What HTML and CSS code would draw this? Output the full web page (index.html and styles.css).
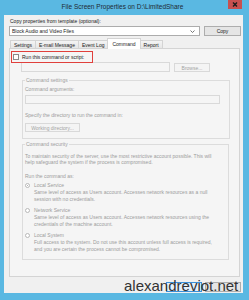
FILE: index.html
```html
<!DOCTYPE html>
<html lang="en">
<head>
    <meta charset="UTF-8">
    <title>File Screen Properties on D:\LimitedShare</title>
    <link rel="stylesheet" href="styles.css">
</head>
<body>

    <div class="window">
        <!-- Title bar -->
        <div class="titlebar">
            <span class="title">File Screen Properties on D:\LimitedShare</span>
            <span class="close">
                <svg width="14" height="9" viewBox="0 0 14 9">
                    <path d="M5 2.5 L9 6.5 M9 2.5 L5 6.5" stroke="#1b1b1b" stroke-width="1.4"/>
                </svg>
            </span>
        </div>

        <div class="frame">
            <div class="client">
                <div class="label top-label">Copy properties from template (optional):</div>
                <div class="template-row">
                    <div class="combo">
                        <span>Block Audio and Video Files</span>
                        <svg width="5" height="3" viewBox="0 0 5 3">
                            <path d="M0.5 0.5 L2.5 2.5 L4.5 0.5" stroke="#555" stroke-width="0.8" fill="none"/>
                        </svg>
                    </div>
                    <div class="btn copy-btn">Copy</div>
                </div>

                <!-- Tabs -->
                <div class="tabs">
                    <span class="tab">Settings</span>
                    <span class="tab">E-mail Message</span>
                    <span class="tab">Event Log</span>
                    <span class="tab active">Command</span>
                    <span class="tab">Report</span>
                </div>

                <div class="panel">
                    <div class="run-row">
                        <span class="checkbox"></span>
                        <span>Run this command or script:</span>
                    </div>
                    <div class="path-row">
                        <div class="input path-input"></div>
                        <div class="btn disabled browse-btn">Browse...</div>
                    </div>

                    <!-- Command settings -->
                    <fieldset class="group settings-group">
                        <legend>Command settings</legend>
                        <div class="muted args-label">Command arguments:</div>
                        <div class="input args-input"></div>
                        <div class="muted dir-label">Specify the directory to run the command in:</div>
                        <div class="btn disabled dir-btn">Working directory...</div>
                    </fieldset>

                    <!-- Command security -->
                    <fieldset class="group security-group">
                        <legend>Command security</legend>
                        <div class="muted security-text">To maintain security of the server, use the most restrictive account possible. This will<br>help safeguard the system if the process is compromised.</div>
                        <div class="muted run-as">Run the command as:</div>

                        <div class="radio-row first">
                            <span class="radio checked"></span>
                            <span>Local Service</span>
                        </div>
                        <div class="muted desc">Same level of access as Users account. Accesses network resources as a null<br>session with no credentials.</div>

                        <div class="radio-row">
                            <span class="radio"></span>
                            <span>Network Service</span>
                        </div>
                        <div class="muted desc">Same level of access as Users account. Accesses network resources using the<br>credentials of the machine account.</div>

                        <div class="radio-row">
                            <span class="radio"></span>
                            <span>Local System</span>
                        </div>
                        <div class="muted desc">Full access to the system. Do not use this account unless full access is required,<br>and you are certain the process cannot be compromised.</div>
                    </fieldset>
                </div>

                <!-- OK / Cancel, hidden under the watermark -->
                <div class="dialog-buttons">
                    <div class="btn ok-btn"></div>
                    <div class="btn"></div>
                </div>
            </div>
        </div>

        <div class="watermark">alexandreviot.net</div>
    </div>

</body>
</html>
```

FILE: styles.css
```css
/* --- Base --- */
* {
    margin: 0;
    padding: 0;
    box-sizing: border-box;
}

body {
    font-family: 'Liberation Sans', Arial, sans-serif;
    background-color: #5ab8e2;
    width: 249px;
    height: 300px;
    overflow: hidden;
}

/* --- Window frame --- */
.window {
    position: relative;
    width: 249px;
    height: 300px;
    display: flex;
    flex-direction: column;
    background-color: #5ab8e2;
}

.titlebar {
    height: 15px;
    display: flex;
    align-items: flex-start;
    justify-content: center;
    padding-right: 4px;
}

.title {
    font-size: 6.5px;
    line-height: 13px;
    color: #1f2a33;
}

.close {
    position: absolute;
    top: 0;
    left: 228px;
    width: 14px;
    height: 9px;
    background-color: #c75050;
    display: flex;
}

.frame {
    flex: 1;
    padding: 0 6px 7px 4px;
    display: flex;
}

.client {
    flex: 1;
    background-color: #f0f0f0;
    padding: 3px 2px 0 5px;
    font-size: 5px;
    line-height: 6px;
    color: #1a1a1a;
}

/* --- Template row --- */
.top-label {
    padding-left: 1px;
}

.template-row {
    display: flex;
    margin-top: 2px;
    height: 10px;
}

.combo {
    width: 191px;
    background-color: #ffffff;
    border: 1px solid #acacac;
    display: flex;
    align-items: center;
    justify-content: space-between;
    padding: 0 4px 0 2px;
}

.btn {
    display: flex;
    align-items: center;
    justify-content: center;
    background-color: #e5e5e5;
    border: 1px solid #adadad;
    color: #1a1a1a;
}

.copy-btn {
    width: 37px;
    margin-left: 4px;
}

/* --- Tabs --- */
.tabs {
    display: flex;
    height: 10px;
    margin-top: 2px;
    padding-left: 1px;
    position: relative;
    z-index: 1;
}

.tab {
    margin-top: 2px;
    height: 8px;
    padding: 0 3px;
    border: 1px solid #d4d4d4;
    border-bottom: none;
    border-right: none;
    background-image: linear-gradient(#f4f4f4, #e6e6e6);
    display: flex;
    align-items: center;
}

.tab:nth-child(5) {
    border-right: 1px solid #d4d4d4;
}

.tab.active {
    margin-top: 0;
    height: 11px;
    background-image: none;
    background-color: #ffffff;
    border-right: 1px solid #d4d4d4;
    margin-right: -1px;
    padding: 0 4px;
    align-items: flex-start;
    padding-top: 2px;
}

/* --- Tab panel --- */
.panel {
    height: 229px;
    margin-right: 1px;
    border: 1px solid #d4d4d4;
    background-color: #f5f5f5;
    padding-top: 2px;
}

.run-row {
    width: 82px;
    height: 12px;
    margin-left: 1px;
    border: 1px solid #e0403c;
    display: flex;
    align-items: center;
    gap: 3px;
    padding-left: 1px;
    position: relative;
    z-index: 1;
}

.checkbox {
    width: 6px;
    height: 6px;
    border: 1px solid #8a8a8a;
    background-color: #ffffff;
}

.path-row {
    display: flex;
    margin-top: -1px;
    margin-left: 11px;
    height: 10px;
}

.input {
    border: 1px solid #d9d9d9;
    background-color: #f5f5f5;
}

.path-input {
    width: 149px;
}

.btn.disabled {
    background-color: #f4f4f4;
    border-color: #d9d9d9;
    color: #a3a3a3;
}

.browse-btn {
    width: 36px;
    margin-left: 4px;
    margin-top: 1px;
    height: 9px;
}

/* --- Group boxes --- */
.group {
    border: 1px solid #dcdcdc;
    margin-left: 12px;
    padding: 0 6px 0 2px;
    min-width: 0;
}

.group legend {
    padding: 0 1px;
    color: #9c9c9c;
    line-height: 6px;
}

.muted {
    color: #9c9c9c;
}

.settings-group {
    width: 208px;
    margin-top: 5px;
    padding-bottom: 6px;
}

.args-label {
    margin-top: 3px;
}

.args-input {
    width: 195px;
    height: 9px;
    margin-top: 3px;
}

.dir-label {
    margin-top: 8px;
}

.dir-btn {
    width: 55px;
    height: 9px;
    margin-top: 5px;
}

.security-group {
    width: 207px;
    margin-top: 2px;
    padding-bottom: 6px;
}

.security-text {
    margin-top: 6px;
}

.run-as {
    margin-top: 8px;
}

.radio-row {
    display: flex;
    align-items: center;
    gap: 4px;
    margin-top: 4px;
    color: #9c9c9c;
    padding-left: 0;
}

.radio-row.first {
    margin-top: 3px;
}

.radio {
    width: 5px;
    height: 5px;
    border-radius: 50%;
    border: 1px solid #b8b8b8;
    background-color: #ffffff;
    position: relative;
}

.radio.checked::after {
    content: '';
    position: absolute;
    left: 1px;
    top: 1px;
    width: 1px;
    height: 1px;
    border-radius: 50%;
    background-color: #9c9c9c;
}

.desc {
    padding-left: 9px;
    margin-top: 1px;
    line-height: 7px;
}

/* --- Dialog buttons --- */
.dialog-buttons {
    display: flex;
    justify-content: flex-end;
    gap: 3px;
    margin-top: 5px;
    height: 10px;
}

.dialog-buttons .btn {
    width: 36px;
}

.ok-btn {
    border-color: #3c90d8;
    background-color: #e5f1fb;
}

/* --- Watermark --- */
.watermark {
    position: absolute;
    left: 124px;
    top: 278px;
    font-size: 15px;
    line-height: 1;
    color: #333333;
}
```
